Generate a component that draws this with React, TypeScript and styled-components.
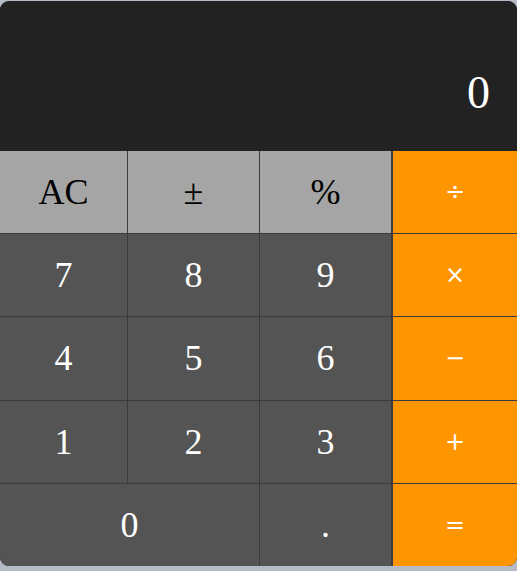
import * as React from 'react';
import styled, { createGlobalStyle } from 'styled-components';

const GlobalStyle = createGlobalStyle`
  html, body {
    margin: 0;
    padding: 0;
    background: #b4bbc7;
  }
  body {
    font-family: "Liberation Serif", "Times New Roman", serif;
  }
`;

const Calculator = styled.div`
  margin-top: 1px;
  width: 517px;
  height: 565px;
  display: flex;
  flex-direction: column;
  border-radius: 9px;
  overflow: hidden;
  background: #3b3b3b;
`;

const Display = styled.div`
  height: 150px;
  flex: none;
  background: #222222;
  color: #ffffff;
  display: flex;
  align-items: flex-end;
  justify-content: flex-end;
  padding: 0 27px 35px 0;
  box-sizing: border-box;
  font-size: 46px;
  line-height: 1;
`;

const Keys = styled.div`
  flex: 1;
  display: grid;
  grid-template-columns: 127fr 131fr 131fr 125fr;
  grid-template-rows: repeat(5, 1fr);
  gap: 1px;
  background: #3b3b3b;
`;

type Kind = 'func' | 'digit' | 'op';

const colors: Record<Kind, { bg: string; fg: string }> = {
  func: { bg: '#a5a5a5', fg: '#000000' },
  digit: { bg: '#545454', fg: '#ffffff' },
  op: { bg: '#ff9500', fg: '#ffffff' },
};

const Key = styled.button<{ $kind: Kind; $wide?: boolean }>`
  border: none;
  margin: 0;
  padding: 0;
  display: flex;
  align-items: center;
  justify-content: center;
  font-family: "Liberation Serif", "Times New Roman", serif;
  font-size: 36px;
  background: ${(p) => colors[p.$kind].bg};
  color: ${(p) => colors[p.$kind].fg};
  grid-column: ${(p) => (p.$wide ? 'span 2' : 'auto')};
  border-left: ${(p) => (p.$kind === 'op' ? '1px solid #3b3b3b' : 'none')};
  cursor: pointer;
`;

const OpSymbol = styled.span`
  font-family: "DejaVu Sans", "Liberation Sans", sans-serif;
  font-size: 24px;
`;

const rows: { label: string; kind: Kind; wide?: boolean }[] = [
  { label: 'AC', kind: 'func' },
  { label: '±', kind: 'func' },
  { label: '%', kind: 'func' },
  { label: '÷', kind: 'op' },
  { label: '7', kind: 'digit' },
  { label: '8', kind: 'digit' },
  { label: '9', kind: 'digit' },
  { label: '×', kind: 'op' },
  { label: '4', kind: 'digit' },
  { label: '5', kind: 'digit' },
  { label: '6', kind: 'digit' },
  { label: '−', kind: 'op' },
  { label: '1', kind: 'digit' },
  { label: '2', kind: 'digit' },
  { label: '3', kind: 'digit' },
  { label: '+', kind: 'op' },
  { label: '0', kind: 'digit', wide: true },
  { label: '.', kind: 'digit' },
  { label: '=', kind: 'op' },
];

export default function App() {
  return (
    <>
      <GlobalStyle />
      <Calculator>
        <Display>0</Display>
        <Keys>
          {rows.map((k) => (
            <Key key={k.label} $kind={k.kind} $wide={k.wide}>
              {k.kind === 'op' ? <OpSymbol>{k.label}</OpSymbol> : k.label}
            </Key>
          ))}
        </Keys>
      </Calculator>
    </>
  );
}
